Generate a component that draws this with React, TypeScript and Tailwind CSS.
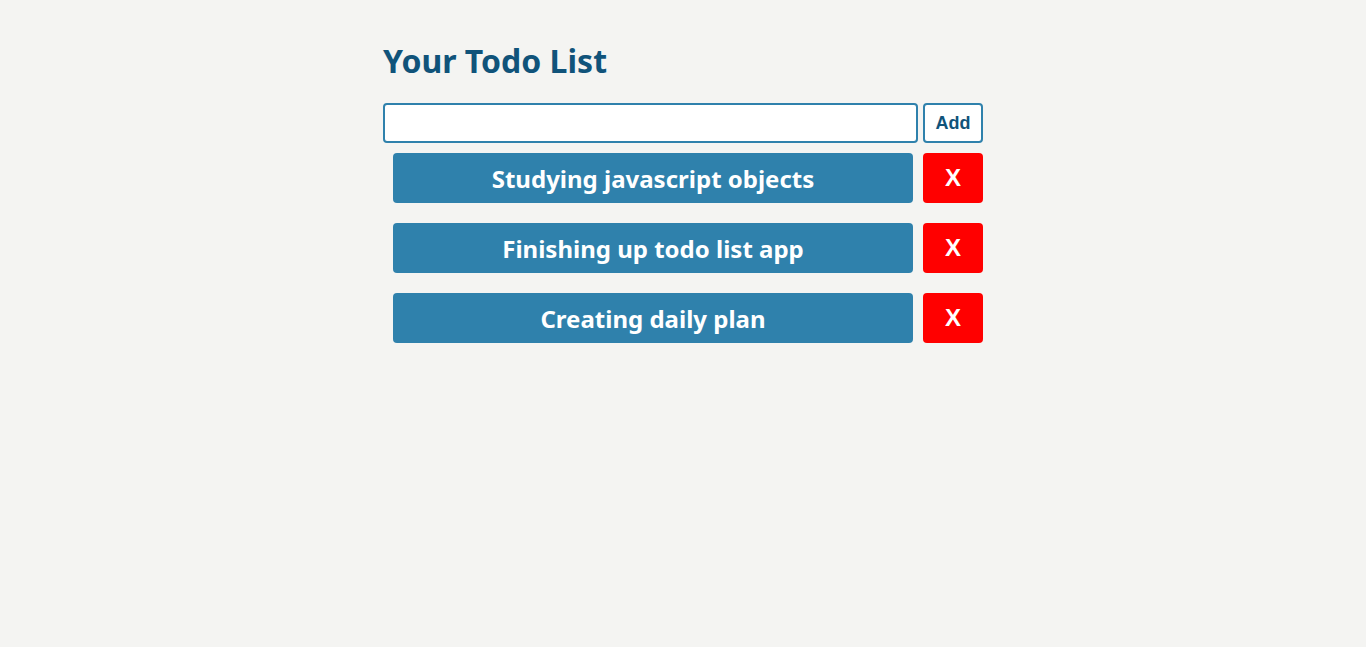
import React, { useState } from 'react';

const initialTodos = ['Studying javascript objects', 'Finishing up todo list app', 'Creating daily plan'];

export default function App() {
  const [todos, setTodos] = useState<string[]>(initialTodos);
  const [text, setText] = useState('');

  const add = () => {
    if (!text.trim()) return;
    setTodos([...todos, text.trim()]);
    setText('');
  };

  return (
    <div className="min-h-screen bg-[#f4f4f2] font-['Noto_Sans',sans-serif]">
      <div className="w-[600px] mx-auto pt-[39px]">
        <h1 className="text-[32px] font-bold text-[#10537a] leading-[44px] mb-[20px]">Your Todo List</h1>
        <div className="flex gap-[5px] mb-[10px]">
          <input
            value={text}
            onChange={(e) => setText(e.target.value)}
            className="w-[535px] h-[40px] bg-white border-2 border-[#2f81ac] rounded-[4px] px-2 outline-none"
          />
          <button
            onClick={add}
            className="w-[60px] h-[40px] bg-white border-2 border-[#2f81ac] rounded-[4px] text-[#10537a] font-bold text-[18px] pt-[1px] font-['Liberation_Sans',sans-serif]"
          >
            Add
          </button>
        </div>
        <ul className="flex flex-col gap-[20px]">
          {todos.map((t, i) => (
            <li key={i} className="flex items-center">
              <div className="w-[520px] h-[50px] ml-[10px] mr-[10px] pt-[2px] bg-[#2f81ac] rounded-[4px] flex items-center justify-center text-white font-bold text-[24px]">
                {t}
              </div>
              <button
                onClick={() => setTodos(todos.filter((_, j) => j !== i))}
                className="w-[60px] h-[50px] bg-[#ff0000] rounded-[4px] text-white font-bold text-[24px] font-['Liberation_Sans',sans-serif]"
              >
                X
              </button>
            </li>
          ))}
        </ul>
      </div>
    </div>
  );
}
